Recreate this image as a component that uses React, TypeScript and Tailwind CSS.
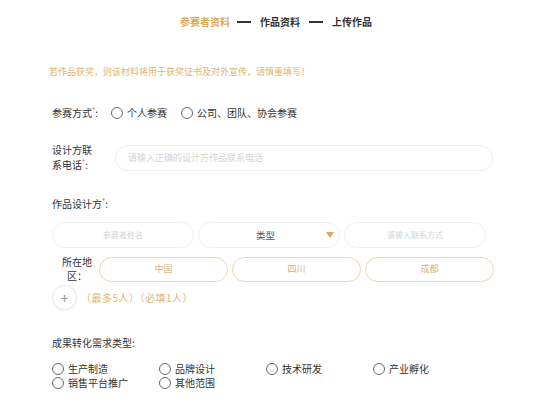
import React from "react";

const Star = () => (
  <span className="inline-block text-[#f56c6c] text-[8px] leading-[8px] align-top font-['Liberation_Sans',sans-serif]">*</span>
);

const Radio = ({ label }: { label: string }) => (
  <div className="flex items-center gap-[4px] h-[14px]">
    <span className="w-[12px] h-[12px] rounded-full border border-[#666] bg-white shrink-0" />
    <span className="leading-[14px] whitespace-nowrap">{label}</span>
  </div>
);

export default function App() {
  return (
    <div className="w-[550px] h-[406px] bg-white text-[#333] text-[10px] overflow-hidden font-['Noto_Sans_CJK_SC','Noto_Sans',sans-serif]">
      <div className="h-[44px] flex items-center justify-center font-bold text-[10px] leading-[14px] pl-[2px]">
        <span className="text-[#dcaa5c]">参赛者资料</span>
        <span className="w-[14px] h-[2px] bg-[#333] ml-[7px] mr-[9px]" />
        <span>作品资料</span>
        <span className="w-[14px] h-[2px] bg-[#333] ml-[9px] mr-[9px]" />
        <span>上传作品</span>
      </div>

      <div className="px-[52px] flex flex-col">
        <div className="mt-[21px] leading-[14px] text-[9px] text-[#e3b46c] -ml-[3px]">
          若作品获奖，则该材料将用于获奖证书及对外宣传，请慎重填写！
        </div>

        <div className="mt-[27px] flex items-center h-[14px] leading-[14px]">
          <span className="w-[59px] whitespace-nowrap">
            参赛方式<Star />:
          </span>
          <div className="flex items-center gap-[14px]">
            <Radio label="个人参赛" />
            <Radio label="公司、团队、协会参赛" />
          </div>
        </div>

        <div className="mt-[23px] flex items-center">
          <div className="w-[63px] leading-[14px]">
            <div>设计方联</div>
            <div className="mt-[1px]">
              系电话<Star />:
            </div>
          </div>
          <div className="w-[378px] h-[26px] rounded-full border border-[#f0f0f0] flex items-center pl-[12px] text-[9px] text-[#d4d4d4]">
            请输入正确的设计方作品联系电话
          </div>
        </div>

        <div className="mt-[25px] leading-[14px]">
          作品设计方<Star />:
        </div>

        <div className="mt-[11px] flex gap-[4px]">
          <div className="w-[142px] h-[26px] rounded-full border border-[#f0f0f0] flex items-center justify-center text-[8px] text-[#d4d4d4]">
            参赛者姓名
          </div>
          <div className="w-[142px] h-[26px] rounded-full border border-[#f0f0f0] flex items-center pr-[5px]">
            <span className="flex-1 text-center text-[9.5px] text-[#555] pl-[6px]">类型</span>
            <svg width="8" height="6" viewBox="0 0 8 6" className="shrink-0">
              <path d="M0 0 L8 0 L4 6 Z" fill="#d9a95a" />
            </svg>
          </div>
          <div className="w-[142px] h-[26px] rounded-full border border-[#f0f0f0] flex items-center justify-center text-[8px] text-[#d4d4d4]">
            请输入联系方式
          </div>
        </div>

        <div className="mt-[7px] flex items-center">
          <div className="w-[47px] text-center leading-[14px] pl-[3px]">
            <div>所在地</div>
            <div>区：</div>
          </div>
          <div className="flex gap-[4px]">
            {["中国", "四川", "成都"].map((t) => (
              <div
                key={t}
                className="w-[129px] h-[25px] rounded-full border border-[#ecd8b0] flex items-center justify-center text-[9px] text-[#d9b47c]"
              >
                {t}
              </div>
            ))}
          </div>
        </div>

        <div className="mt-[2px] flex items-center gap-[4px]">
          <div className="w-[25px] h-[25px] rounded-full border border-[#e6e6e6] flex items-center justify-center text-[#999] text-[14px] leading-none shadow-[0_1px_2px_rgba(0,0,0,0.05)]">
            +
          </div>
          <span className="text-[10px] tracking-[0.5px] text-[#e3b46c] leading-[14px]">（最多5人）（必填1人）</span>
        </div>

        <div className="mt-[26px] leading-[14px]">成果转化需求类型:</div>

        <div className="mt-[12px] grid grid-cols-[107px_107px_107px_107px]">
          <Radio label="生产制造" />
          <Radio label="品牌设计" />
          <Radio label="技术研发" />
          <Radio label="产业孵化" />
          <Radio label="销售平台推广" />
          <Radio label="其他范围" />
        </div>
      </div>
    </div>
  );
}
